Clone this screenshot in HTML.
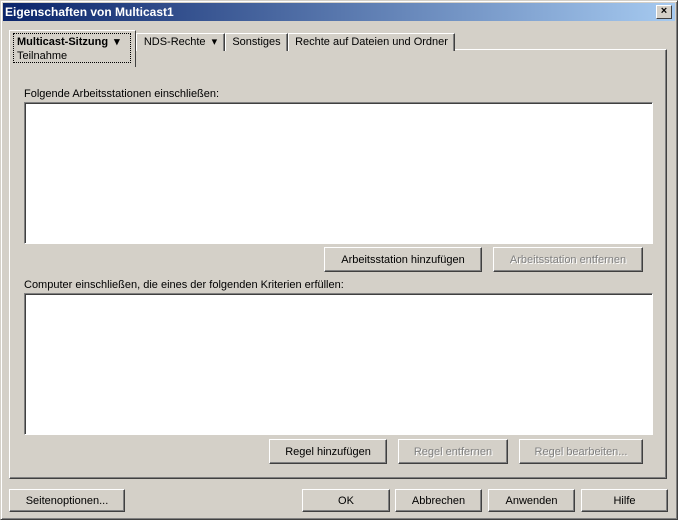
<!DOCTYPE html><html><head><style>
body{margin:0;width:678px;height:520px;background:#d4d0c8;font:11px "Liberation Sans",sans-serif;position:relative;overflow:hidden}
.a{position:absolute}
.win{left:0;top:0;width:676px;height:518px;border:1px solid;border-color:#d4d0c8 #404040 #404040 #d4d0c8;box-shadow:inset 1px 1px #fff,inset -1px -1px #808080}
.title{left:3px;top:3px;width:672px;height:18px;background:linear-gradient(90deg,#0a246a,#a6caf0);color:#fff;font-weight:bold;font-size:12px;line-height:18px;text-indent:2px}
.cls{left:656px;top:5px;width:14px;height:12px;background:#d4d0c8;border:1px solid;border-color:#fff #404040 #404040 #fff;color:#000;font-size:11px;line-height:11px;text-align:center;font-weight:bold}
.panel{left:9px;top:49px;width:656px;height:428px;border:1px solid;border-color:#fff #404040 #404040 #fff;box-shadow:inset -1px -1px #808080}
.tab{top:33px;height:17px;border:1px solid;border-bottom:none;border-color:#fff #404040 #404040 #fff;box-shadow:inset -1px 0 #808080;line-height:17px;text-align:center;background:#d4d0c8}
.list{background:#fff;border:1px solid;border-color:#808080 #fff #fff #808080;box-shadow:inset 1px 1px #404040}
.btn{height:23px;border:1px solid;border-color:#fff #404040 #404040 #fff;box-shadow:inset -1px -1px #808080;text-align:center;line-height:23px;box-sizing:border-box;background:#d4d0c8}
.dis{color:#808080;text-shadow:1px 1px #fff}
</style></head><body>
<div class="a win"></div>
<div class="a title">Eigenschaften von Multicast1</div>
<div class="a cls">×</div>
<div class="a panel"></div>
<div class="a tab" style="left:136px;width:87px">NDS-Rechte &nbsp;▾</div>
<div class="a tab" style="left:225px;width:61px">Sonstiges</div>
<div class="a tab" style="left:288px;width:165px">Rechte auf Dateien und Ordner</div>
<div class="a" style="left:9px;top:30px;width:125px;height:36px;border:1px solid;border-bottom:none;border-color:#fff #404040 #404040 #fff;background:#d4d0c8"></div>
<div class="a" style="left:13px;top:33px;width:118px;height:30px;border:1px dotted #000;box-sizing:border-box"></div>
<div class="a" style="left:17px;top:35px;font-weight:bold">Multicast-Sitzung &nbsp;▾</div>
<div class="a" style="left:17px;top:50px">Teilnahme</div>
<div class="a" style="left:24px;top:88px">Folgende Arbeitsstationen einschließen:</div>
<div class="a list" style="left:24px;top:102px;width:627px;height:140px"></div>
<div class="a btn" style="left:324px;top:247px;width:158px;height:25px;line-height:25px">Arbeitsstation hinzufügen</div>
<div class="a btn dis" style="left:493px;top:247px;width:150px;height:25px;line-height:25px">Arbeitsstation entfernen</div>
<div class="a" style="left:24px;top:279px">Computer einschließen, die eines der folgenden Kriterien erfüllen:</div>
<div class="a list" style="left:24px;top:293px;width:627px;height:140px"></div>
<div class="a btn" style="left:269px;top:439px;width:118px;height:25px;line-height:25px">Regel hinzufügen</div>
<div class="a btn dis" style="left:398px;top:439px;width:110px;height:25px;line-height:25px">Regel entfernen</div>
<div class="a btn dis" style="left:519px;top:439px;width:124px;height:25px;line-height:25px">Regel bearbeiten...</div>
<div class="a btn" style="left:9px;top:489px;width:116px">Seitenoptionen...</div>
<div class="a btn" style="left:302px;top:489px;width:88px">OK</div>
<div class="a btn" style="left:395px;top:489px;width:87px">Abbrechen</div>
<div class="a btn" style="left:488px;top:489px;width:87px">Anwenden</div>
<div class="a btn" style="left:581px;top:489px;width:87px">Hilfe</div>
</body></html>
